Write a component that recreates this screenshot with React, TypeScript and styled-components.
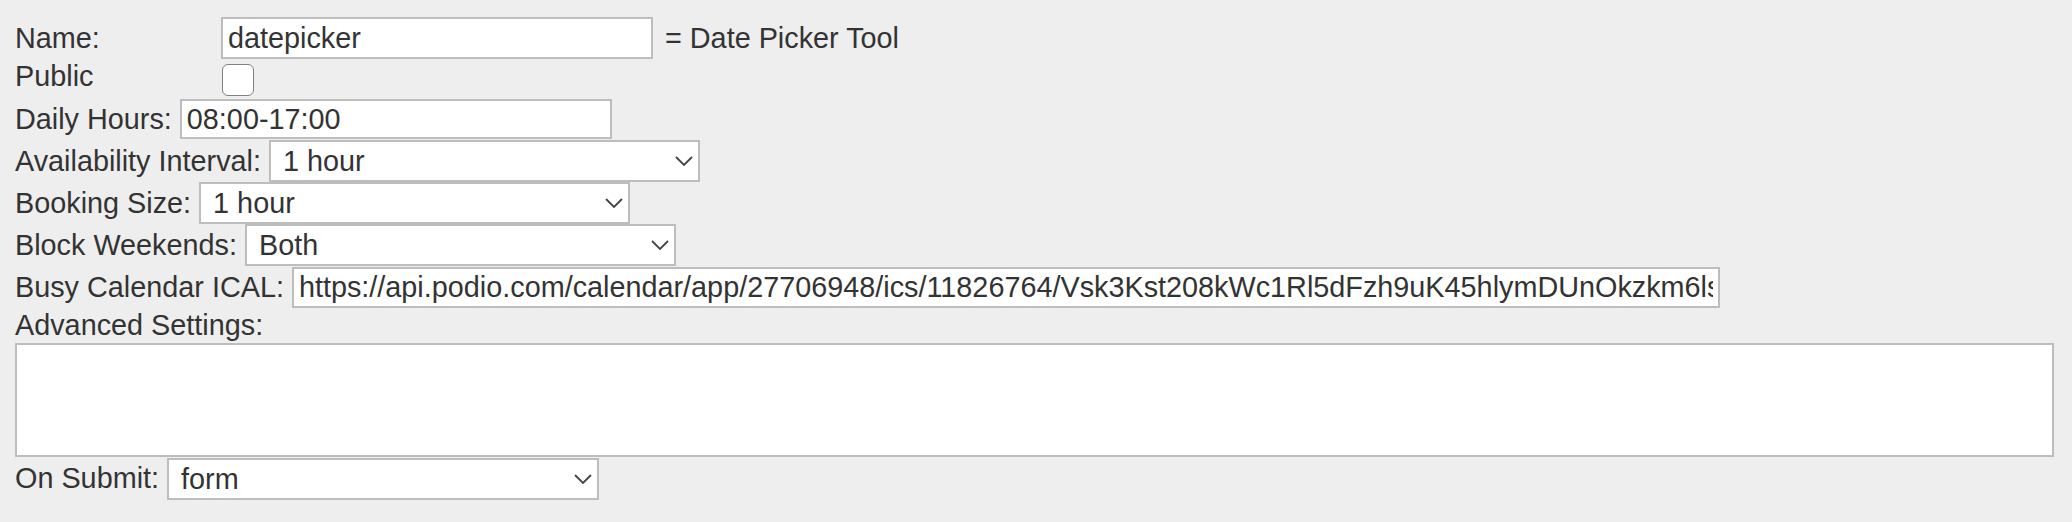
import styled, { createGlobalStyle } from "styled-components";

const GlobalStyle = createGlobalStyle`
  html, body {
    margin: 0;
    background-color: #eeeeee;
  }
  body {
    font-family: "Liberation Sans", Arial, Helvetica, sans-serif;
    font-size: 28.8px;
    color: #333;
  }
`;

const Chevron = () => (
  <ChevronIcon width="18" height="10" viewBox="0 0 18 10">
    <polyline points="1,1 9,9 17,1" fill="none" stroke="#444" strokeWidth="1.8" />
  </ChevronIcon>
);

const Dropdown = ({ width, value, options }: { width: number; value: string; options: string[] }) => (
  <SelectWrapper $w={width}>
    <Select defaultValue={value}>
      {options.map((o) => (
        <option key={o}>{o}</option>
      ))}
    </Select>
    <Chevron />
  </SelectWrapper>
);

const hours = ["15 minutes", "30 minutes", "1 hour", "2 hours"];

export default function App() {
  return (
    <>
      <GlobalStyle />
      <Form onSubmit={(e) => e.preventDefault()}>
        <Row $h={46}>
          <Label $w={206}>Name:</Label>
          <TextInput $w={432} $h={42} $pad={5} defaultValue="datepicker" />
          <Note>= Date Picker Tool</Note>
        </Row>
        <Row $h={37}>
          <Label $w={207} $raise={3}>
            Public
          </Label>
          <Checkbox type="checkbox" />
        </Row>
        <Row $h={42}>
          <Label>Daily Hours:</Label>
          <TextInput $w={432} $h={40} $pad={5} defaultValue="08:00-17:00" />
        </Row>
        <Row $h={42.2}>
          <Label>Availability Interval:</Label>
          <Dropdown width={431} value="1 hour" options={hours} />
        </Row>
        <Row $h={42.2}>
          <Label>Booking Size:</Label>
          <Dropdown width={431} value="1 hour" options={hours} />
        </Row>
        <Row $h={42.2}>
          <Label>Block Weekends:</Label>
          <Dropdown width={431} value="Both" options={["None", "Saturday", "Sunday", "Both"]} />
        </Row>
        <Row $h={42.2}>
          <Label>Busy Calendar ICAL:</Label>
          <TextInput
            $w={1428}
            $h={41}
            $pad={5}
            defaultValue="https://api.podio.com/calendar/app/27706948/ics/11826764/Vsk3Kst208kWc1Rl5dFzh9uK45hlymDUnOkzkm6lsQe2xT"
          />
        </Row>
        <Row $h={34}>
          <Label>Advanced Settings:</Label>
        </Row>
        <TextArea />
        <Row $h={43}>
          <Label>On Submit:</Label>
          <Dropdown width={432} value="form" options={["form", "redirect", "message"]} />
        </Row>
      </Form>
    </>
  );
}

const Form = styled.form`
  display: flex;
  flex-direction: column;
  padding: 15px 16px 0 15px;
`;

const Row = styled.div<{ $h: number }>`
  display: flex;
  align-items: center;
  height: ${(p) => p.$h}px;
  flex: none;
`;

const Label = styled.label<{ $w?: number; $raise?: number }>`
  flex: none;
  white-space: nowrap;
  width: ${(p) => (p.$w ? `${p.$w}px` : "auto")};
  margin-right: ${(p) => (p.$w ? 0 : 8)}px;
  position: relative;
  top: ${(p) => -(p.$raise ?? 0)}px;
`;

const TextInput = styled.input<{ $w: number; $h: number; $pad: number }>`
  box-sizing: border-box;
  width: ${(p) => p.$w}px;
  height: ${(p) => p.$h}px;
  margin: 0;
  padding: 0 ${(p) => p.$pad}px;
  border: 2px solid #bdbdbd;
  background-color: #fff;
  color: #333;
  font: inherit;
  outline: none;
`;

const Note = styled.span`
  margin-left: 12px;
  white-space: nowrap;
`;

const Checkbox = styled.input`
  appearance: none;
  box-sizing: border-box;
  width: 32px;
  height: 32px;
  margin: 0;
  border: 1.8px solid #808080;
  border-radius: 6px;
  background-color: #fff;
`;

const SelectWrapper = styled.span<{ $w: number }>`
  position: relative;
  display: inline-flex;
  width: ${(p) => p.$w}px;
  height: 42px;
`;

const Select = styled.select`
  appearance: none;
  box-sizing: border-box;
  width: 100%;
  height: 100%;
  margin: 0;
  padding: 0 40px 0 12px;
  border: 2px solid #bdbdbd;
  border-radius: 0;
  background-color: #fff;
  color: #333;
  font: inherit;
  outline: none;
`;

const ChevronIcon = styled.svg`
  position: absolute;
  right: 7px;
  top: 50%;
  transform: translateY(-50%);
  pointer-events: none;
`;

const TextArea = styled.textarea`
  box-sizing: border-box;
  width: calc(100% - 2px);
  height: 114px;
  margin: 0.5px 0 0 0;
  border: 2px solid #bdbdbd;
  background-color: #fff;
  resize: none;
  font: inherit;
  outline: none;
`;
